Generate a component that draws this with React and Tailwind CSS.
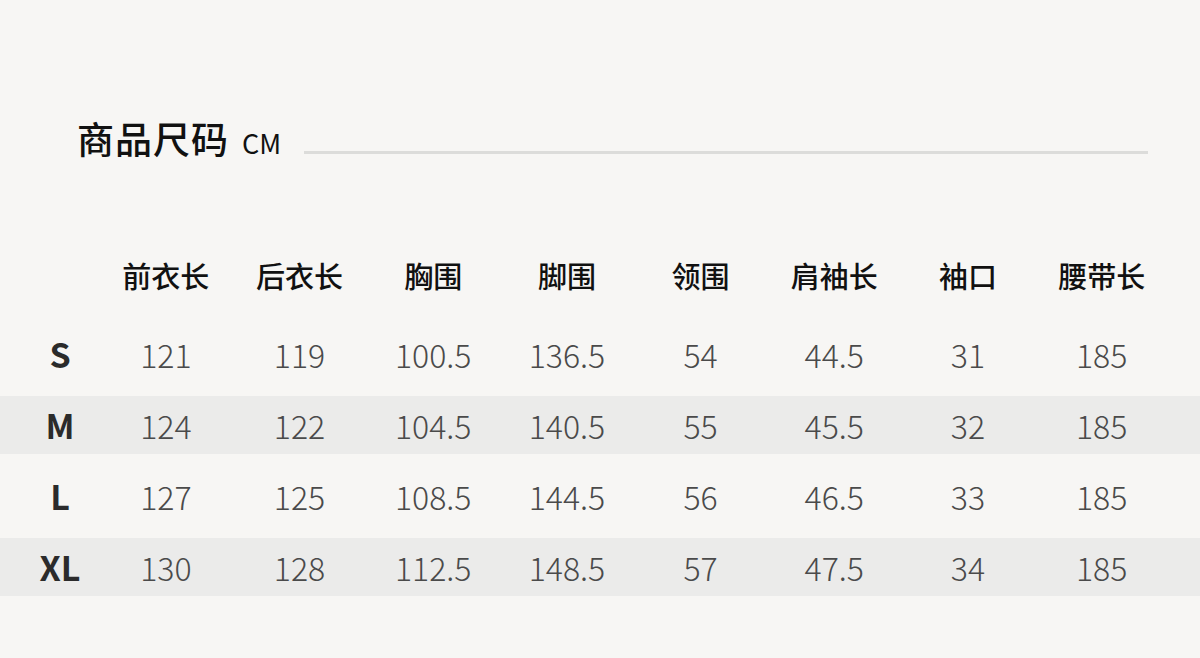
import React from "react";

const headers = ["前衣长", "后衣长", "胸围", "脚围", "领围", "肩袖长", "袖口", "腰带长"];

const rows = [
    { size: "S", values: ["121", "119", "100.5", "136.5", "54", "44.5", "31", "185"] },
    { size: "M", values: ["124", "122", "104.5", "140.5", "55", "45.5", "32", "185"] },
    { size: "L", values: ["127", "125", "108.5", "144.5", "56", "46.5", "33", "185"] },
    { size: "XL", values: ["130", "128", "112.5", "148.5", "57", "47.5", "34", "185"] },
];

const font = { fontFamily: '"Noto Sans CJK SC", "Noto Sans", sans-serif' };

const App = () => {
    return (
        <div className="w-[1200px] h-[658px] bg-[#f7f6f4] overflow-hidden" style={font}>
            {/* Title */}
            <div className="flex items-baseline pt-[120px] pl-[77px] pr-[52px]">
                <h1 className="text-[37px] font-medium leading-none text-[#111] tracking-[1px]">商品尺码</h1>
                <span className="ml-[13px] text-[27px] leading-none text-[#111]">CM</span>
                <div className="flex-1 h-[3px] ml-[23px] mb-[4px] bg-[#dcdcda]"></div>
            </div>

            {/* Header */}
            <div className="grid grid-cols-[99px_repeat(8,133.7px)] h-[58px] items-center mt-[88px]">
                <div></div>
                {headers.map((h, i) => (
                    <div key={i} className="text-center text-[29px] font-medium leading-none text-[#111]">
                        {h}
                    </div>
                ))}
            </div>

            {/* Rows */}
            <div className="mt-[14px]">
                {rows.map((row, i) => (
                    <div key={row.size} className="h-[71px] flex items-center">
                        <div
                            className={`w-full h-[58px] grid grid-cols-[99px_repeat(8,133.7px)] items-center ${i % 2 === 1 ? "bg-[#ebebea]" : ""}`}
                        >
                            <div className="pl-[21px] text-center text-[34px] font-semibold leading-none text-[#2b2b2b]">
                                {row.size}
                            </div>
                            {row.values.map((v, j) => (
                                <div key={j} className="text-center text-[32px] font-light leading-none text-[#4a4a4a]">
                                    {v}
                                </div>
                            ))}
                        </div>
                    </div>
                ))}
            </div>
        </div>
    );
};

export default App;
